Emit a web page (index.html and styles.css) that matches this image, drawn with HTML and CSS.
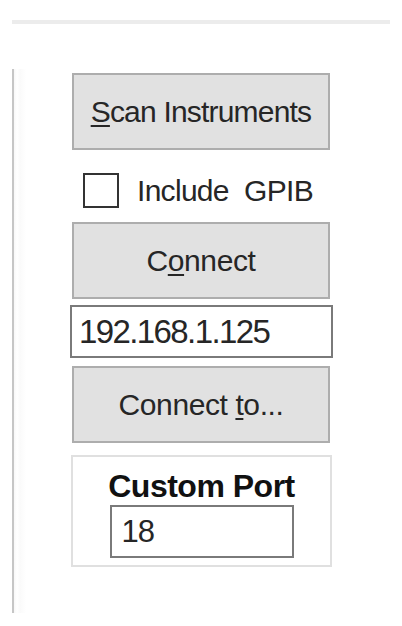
FILE: index.html
```html
<!DOCTYPE html>
<html>
<head>
<meta charset="utf-8">
<link rel="stylesheet" href="styles.css">
</head>
<body>
<div class="topline"></div>
<div class="panel">
  <div class="column">
    <div class="btn btn-scan"><span><u>S</u>can Instruments</span></div>
    <div class="check-row">
      <span class="checkbox"></span>
      <span class="check-label">Include&nbsp; GPIB</span>
    </div>
    <div class="btn btn-connect"><span>C<u>o</u>nnect</span></div>
    <div class="textbox ip">192.168.1.125</div>
    <div class="btn btn-connect-to"><span>Connect <u>t</u>o...</span></div>
    <div class="group">
      <div class="group-label">Custom Port</div>
      <div class="textbox port">18</div>
    </div>
  </div>
</div>
</body>
</html>
```
FILE: styles.css
```css
html, body {
  margin: 0;
  padding: 0;
  background: #ffffff;
}
body {
  width: 402px;
  height: 626px;
  overflow: hidden;
  font-family: "Liberation Sans", Arial, sans-serif;
  color: #1e1e1e;
  white-space: nowrap;
}
.topline {
  margin: 20px 0 0 12px;
  width: 378px;
  height: 4px;
  background: #ececec;
}
.panel {
  margin: 45px 0 0 12px;
  height: 544px;
  border-left: 2px solid #c6c6c6;
  background: linear-gradient(to right, #f7f7f7 0px, #ffffff 3px, #fafafa 6px, #ffffff 12px);
  padding: 4px 0 0 56px;
  box-sizing: border-box;
}
.column {
  width: 263px;
  display: flex;
  flex-direction: column;
}
.btn {
  box-sizing: border-box;
  width: 258px;
  height: 77px;
  margin-left: 2px;
  background: #e1e1e1;
  border: 2px solid #adadad;
  display: flex;
  align-items: center;
  justify-content: center;
  font-size: 30px;
  letter-spacing: -0.8px;
  color: #262626;
}
.btn-connect,
.btn-connect-to {
  letter-spacing: -0.4px;
}
.btn u {
  text-decoration-thickness: 2px;
  text-underline-offset: 3px;
}
.check-row {
  margin: 23px 0 14px 13px;
  height: 35px;
  display: flex;
  align-items: center;
  gap: 18px;
}
.checkbox {
  box-sizing: border-box;
  width: 36px;
  height: 35px;
  border: 2px solid #333;
  background: #fff;
}
.check-label {
  font-size: 30px;
  letter-spacing: -0.7px;
  color: #262626;
}
.textbox {
  box-sizing: border-box;
  height: 53px;
  border: 2px solid #7a7a7a;
  background: #fff;
  display: flex;
  align-items: center;
  color: #262626;
}
.ip {
  width: 263px;
  margin: 6px 0 8px 0;
  padding-left: 7px;
  font-size: 33px;
  letter-spacing: -1.6px;
}
.group {
  box-sizing: border-box;
  width: 261px;
  height: 112px;
  margin: 12px 0 0 1px;
  border: 2px solid #e0e0e0;
  padding-top: 10px;
  display: flex;
  flex-direction: column;
  align-items: center;
}
.group-label {
  font-size: 32px;
  line-height: 38px;
  letter-spacing: -0.5px;
  font-weight: bold;
  color: #111;
}
.port {
  width: 184px;
  padding-left: 10px;
  font-size: 31px;
  letter-spacing: -1px;
}
```
